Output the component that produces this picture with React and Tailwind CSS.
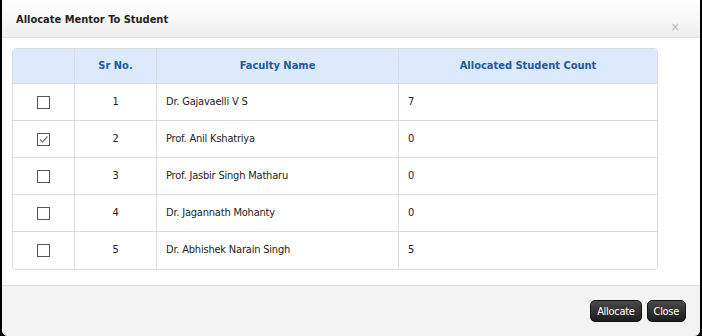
import React from 'react';

const rows = [
  { sr: 1, name: 'Dr. Gajavaelli V S', count: 7, checked: false },
  { sr: 2, name: 'Prof. Anil Kshatriya', count: 0, checked: true },
  { sr: 3, name: 'Prof. Jasbir Singh Matharu', count: 0, checked: false },
  { sr: 4, name: 'Dr. Jagannath Mohanty', count: 0, checked: false },
  { sr: 5, name: 'Dr. Abhishek Narain Singh', count: 5, checked: false },
];

function CheckBox({ checked }) {
  return (
    <div className="w-[13px] h-[13px] border border-[#555] bg-white flex items-center justify-center">
      {checked && (
        <svg width="11" height="11" viewBox="0 0 11 11">
          <path d="M2 5.5 L4.5 8 L9.5 2.5" fill="none" stroke="#777" strokeWidth="1.2" />
        </svg>
      )}
    </div>
  );
}

export default function App() {
  return (
    <div className="w-[702px] h-[336px] bg-black font-['DejaVu_Sans_Condensed','DejaVu_Sans',sans-serif] overflow-hidden">
      <div className="mx-[2px] h-[336px] bg-white rounded-b-[6px] flex flex-col overflow-hidden">
        {/* header */}
        <div className="h-[38px] shrink-0 bg-gradient-to-b from-white to-[#efefef] border-b border-[#dcdcdc] flex items-start pl-[14px] pr-[20px] relative">
          <h1 className="text-[11px] font-bold text-[#222] mt-[12px]">Allocate Mentor To Student</h1>
          <span className="absolute right-[20px] top-[20px] text-[13px] leading-none text-[#b5b5b5]">×</span>
        </div>

        {/* body */}
        <div className="flex-1 pt-[10px] pl-[10px]">
          <div className="w-[646px] border border-[#dcdcdc] rounded-[4px] overflow-hidden text-[11px]">
            <div className="flex h-[35px] bg-[#dce9fc] border-b border-[#dcdcdc] font-bold text-[#1f5a96]">
              <div className="w-[62px] border-r border-[#dcdcdc]" />
              <div className="w-[82px] border-r border-[#dcdcdc] flex items-center justify-center">Sr No.</div>
              <div className="w-[242px] border-r border-[#dcdcdc] flex items-center justify-center">Faculty Name</div>
              <div className="flex-1 flex items-center justify-center">Allocated Student Count</div>
            </div>
            {rows.map((r, i) => (
              <div key={r.sr} className={`flex h-[37px] text-[#222] tracking-[-0.2px] ${i < rows.length - 1 ? 'border-b border-[#dcdcdc]' : ''}`}>
                <div className="w-[62px] border-r border-[#dcdcdc] flex items-center justify-center">
                  <CheckBox checked={r.checked} />
                </div>
                <div className="w-[82px] border-r border-[#dcdcdc] flex items-center justify-center">{r.sr}</div>
                <div className="w-[242px] border-r border-[#dcdcdc] flex items-center pl-[9px]">{r.name}</div>
                <div className="flex-1 flex items-center pl-[9px]">{r.count}</div>
              </div>
            ))}
          </div>
        </div>

        {/* footer */}
        <div className="h-[51px] shrink-0 bg-[#f3f3f3] border-t border-[#dcdcdc] flex items-start justify-end gap-[5px] pt-[14px] pr-[14px]">
          <button className="h-[22px] px-[6px] rounded-[5px] border border-[#111] bg-gradient-to-b from-[#4a4a4a] to-[#1c1c1c] text-white text-[11px] tracking-[-0.3px] leading-none">Allocate</button>
          <button className="h-[22px] px-[6px] rounded-[5px] border border-[#111] bg-gradient-to-b from-[#4a4a4a] to-[#1c1c1c] text-white text-[11px] tracking-[-0.3px] leading-none">Close</button>
        </div>
      </div>
    </div>
  );
}
